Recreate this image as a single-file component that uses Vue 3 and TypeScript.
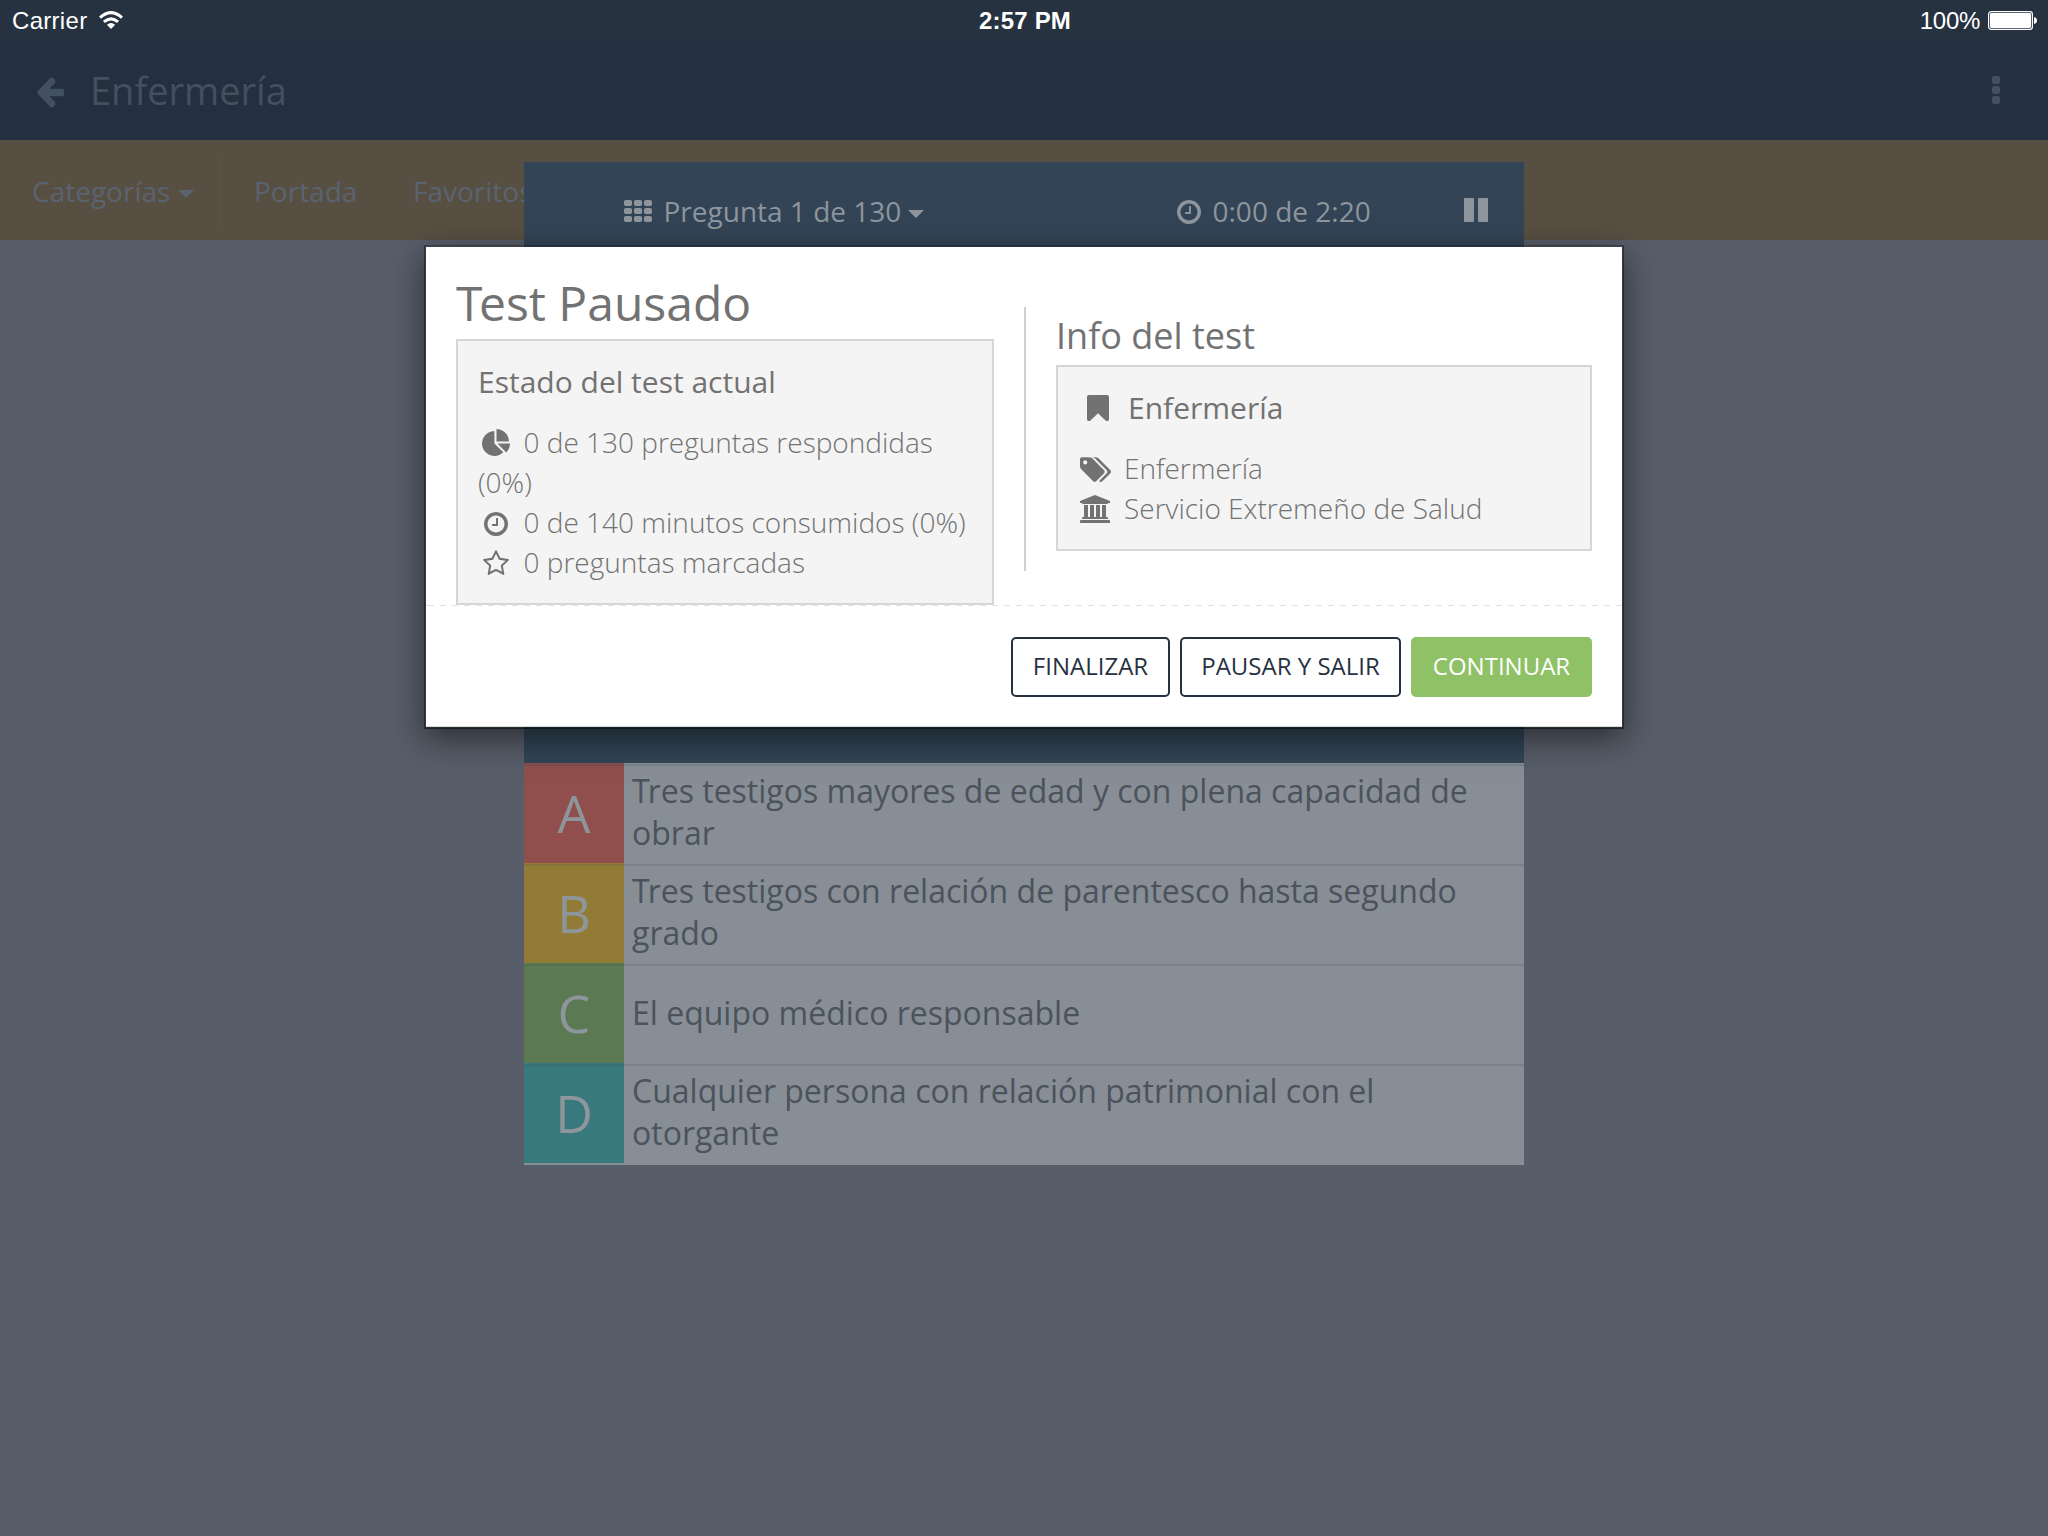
<script setup lang="ts">
interface Answer {
  letter: string
  tone: string
  lines: string[]
}

const answers: Answer[] = [
  { letter: 'A', tone: 'red', lines: ['Tres testigos mayores de edad y con plena capacidad de', 'obrar'] },
  { letter: 'B', tone: 'yellow', lines: ['Tres testigos con relación de parentesco hasta segundo', 'grado'] },
  { letter: 'C', tone: 'green', lines: ['El equipo médico responsable'] },
  { letter: 'D', tone: 'teal', lines: ['Cualquier persona con relación patrimonial con el', 'otorgante'] },
]

const clockPath =
  'M1024 544v448q0 14-9 23t-23 9h-320q-14 0-23-9t-9-23v-64q0-14 9-23t23-9h224v-352q0-14 9-23t23-9h64q14 0 23 9t9 23zm416 352q0-148-73-273t-198-198-273-73-273 73-198 198-73 273 73 273 198 198 273 73 273-73 198-198 73-273zm224 0q0 209-103 385.5t-279.5 279.5-385.5 103-385.5-103-279.5-279.5-103-385.5 103-385.5 279.5-279.5 385.5-103 385.5 103 279.5 279.5 103 385.5z'
</script>

<template>
  <div class="screen">
    <div class="status">
      <div class="status-left">
        <span class="carrier">Carrier</span>
        <svg class="wifi" viewBox="0 0 24 18">
          <g fill="none" stroke="#fff" stroke-width="3.1">
            <path d="M1 6.6Q12-3.4 23 6.6" />
            <path d="M4.9 10.9Q12 4.7 19.1 10.9" />
          </g>
          <path d="M12 18l-4.1-4.3q4.1-3.3 8.2 0z" fill="#fff" />
        </svg>
      </div>
      <div class="time">2:57 PM</div>
      <div class="status-right">
        <span class="percent">100%</span>
        <svg class="battery" viewBox="0 0 50 19">
          <rect x=".6" y=".6" width="43.8" height="17.8" rx="2.6" fill="none" stroke="#fff" stroke-width="1.2" />
          <rect x="2" y="2" width="41" height="15" rx="1.4" fill="#fff" />
          <path d="M46 6q3 .6 3 3.500t-3 3.500z" fill="#fff" />
        </svg>
      </div>
    </div>

    <header class="bar">
      <svg class="back" viewBox="64 151 1600 1618" preserveAspectRatio="none">
        <path d="M1664 896v128q0 53-32.5 90.5t-84.5 37.5h-704l293 294q38 36 38 90t-38 90l-75 76q-37 37-90 37-52 0-91-37l-651-652q-37-37-37-90 0-52 37-91l651-650q38-38 91-38 52 0 90 38l75 74q38 38 38 91t-38 91l-293 293h704q52 0 84.5 37.5t32.5 90.5z" />
      </svg>
      <h1>Enfermería</h1>
      <svg class="dots" viewBox="0 0 8 28">
        <rect v-for="i in 3" :key="i" width="8" height="8" rx="2.2" :y="(i - 1) * 10" />
      </svg>
    </header>

    <nav class="tabs">
      <div class="tab first">Categorías<i class="caret"></i></div>
      <div class="tab second">Portada</div>
      <div class="tab">Favoritos</div>
    </nav>

    <section class="quiz">
      <div class="quiz-head">
        <svg class="grid" viewBox="0 0 28 22">
          <template v-for="r in 3" :key="r">
            <rect v-for="c in 3" :key="c" :x="(c - 1) * 10" :y="(r - 1) * 8" width="8" height="6" rx="1.8" />
          </template>
        </svg>
        <span class="question">Pregunta 1 de 130</span>
        <i class="caret"></i>
        <svg class="clock" viewBox="128 128 1536 1536"><path :d="clockPath" /></svg>
        <span class="timer">0:00 de 2:20</span>
        <svg class="pause" viewBox="0 0 24 24">
          <rect width="10" height="24" rx="1" />
          <rect x="14" width="10" height="24" rx="1" />
        </svg>
      </div>
      <div class="answers">
        <div v-for="a in answers" :key="a.letter" class="answer">
          <div class="letter" :class="a.tone">{{ a.letter }}</div>
          <div class="answer-text" :class="{ wrapped: a.lines.length > 1 }">
            <div v-for="l in a.lines" :key="l" :class="{ kern: l.startsWith('T') }">{{ l }}</div>
          </div>
        </div>
      </div>
    </section>

    <div class="modal">
      <div class="modal-body">
        <div class="col-left">
          <h2>Test Pausado</h2>
          <div class="box state">
            <h4>Estado del test actual</h4>
            <p>
              <svg class="i-pie" viewBox="0 0 1728 1664"><path d="M768 890l546 546q-106 108-247.500 168t-298.500 60q-209 0-385.500-103t-279.500-279.500-103-385.500 103-385.500 279.500-279.500 385.500-103v762zm187 6h773q0 157-60 298.500t-168 247.500zm709-128h-768v-768q209 0 385.500 103t279.500 279.500 103 385.500z" /></svg>
              <span>0 de 130 preguntas respondidas</span><br />(0%)
            </p>
            <p>
              <svg class="i-clock" viewBox="128 128 1536 1536"><path :d="clockPath" /></svg>
              <span>0 de 140 minutos consumidos (0%)</span>
            </p>
            <p>
              <svg class="i-star" viewBox="64 32 1664 1587"><path d="M1201 1004l306-297-422-62-189-382-189 382-422 62 306 297-73 421 378-199 377 199zm527-357q0 22-26 48l-363 354 86 500q1 7 1 20 0 50-41 50-19 0-40-12l-449-236-449 236q-22 12-40 12-21 0-31.500-14.500t-10.500-35.500q0-6 2-20l86-500-364-354q-25-27-25-48 0-37 56-46l502-73 225-455q19-41 49-41t49 41l225 455 502 73q56 9 56 46z" /></svg>
              <span>0 preguntas marcadas</span>
            </p>
          </div>
        </div>
        <div class="divider"></div>
        <div class="col-right">
          <h3>Info del test</h3>
          <div class="box info">
            <h4>
              <svg class="i-mark" viewBox="256 128 1280 1504" preserveAspectRatio="none"><path d="M1420 128q23 0 44 9 33 13 52.500 41t19.500 62v1289q0 34-19.500 62t-52.500 41q-19 8-44 8-48 0-83-32l-441-424-441 424q-36 33-83 33-23 0-44-9-33-13-52.500-41t-19.500-62v-1289q0-34 19.500-62t52.500-41q21-9 44-9h1048z" /></svg>
              <span>Enfermería</span>
            </h4>
            <p>
              <svg class="i-tags" viewBox="0 128 1899 1515"><path d="M448 448q0-53-37.500-90.500t-90.500-37.500-90.500 37.500-37.500 90.500 37.500 90.500 90.500 37.500 90.500-37.500 37.500-90.500zm1067 576q0 53-37 90l-491 492q-39 37-91 37-53 0-90-37l-715-716q-38-37-64.500-101t-26.500-117v-416q0-52 38-90t90-38h416q53 0 117 26.500t102 64.500l715 714q37 39 37 91zm384 0q0 53-37 90l-491 492q-39 37-91 37-36 0-59-14t-53-45l470-470q37-37 37-90 0-52-37-91l-715-714q-38-38-102-64.500t-117-26.500h224q53 0 117 26.500t102 64.500l715 714q37 39 37 91z" /></svg>
              <span>Enfermería</span>
            </p>
            <p>
              <svg class="i-bank" viewBox="0 0 1920 1792"><path d="M960 0l960 384v128h-128q0 26-20.500 45t-48.500 19h-1526q-28 0-48.500-19t-20.500-45h-128v-128zm-704 640h256v768h128v-768h256v768h128v-768h256v768h128v-768h256v768h59q28 0 48.500 19t20.500 45v64h-1664v-64q0-26 20.500-45t48.500-19h59v-768zm1595 960q28 0 48.500 19t20.500 45v128h-1920v-128q0-26 20.500-45t48.500-19h1782z" /></svg>
              <span>Servicio Extremeño de Salud</span>
            </p>
          </div>
        </div>
      </div>
      <div class="modal-foot">
        <button class="b1">FINALIZAR</button>
        <button class="b2">PAUSAR Y SALIR</button>
        <button class="b3">CONTINUAR</button>
      </div>
    </div>
  </div>
</template>

<style>
body {
  background: #575d69;
}
</style>

<style scoped>
.screen {
  position: relative;
  width: 2048px;
  height: 1536px;
  overflow: hidden;
  background: #575d69;
  font-family: "Open Sans", "Liberation Sans", sans-serif;
  white-space: nowrap;
}
h1, h2, h3, h4, p {
  margin: 0;
  font-weight: 400;
}
svg {
  display: block;
  fill: currentColor;
  flex: none;
}
.status {
  display: grid;
  grid-template-columns: 1fr auto 1fr;
  box-sizing: border-box;
  height: 40px;
  padding: 0 10px 0 12px;
  background: #26323f;
  color: #fff;
  font: 24px/41px "Liberation Sans", Arial, sans-serif;
}
.status-left, .status-right {
  display: flex;
}
.status-right {
  justify-content: flex-end;
}
.carrier {
  letter-spacing: 0.3px;
}
.percent {
  letter-spacing: -0.3px;
}
.wifi {
  width: 24px;
  height: 18px;
  margin: 11px 0 0 12px;
}
.time {
  font-weight: 700;
  letter-spacing: 0.2px;
}
.battery {
  width: 50px;
  height: 19px;
  margin: 11px 0 0 8px;
}
.bar {
  display: flex;
  height: 100px;
  background: #243040;
  color: #43505f;
}
.back {
  width: 29.500px;
  height: 31px;
  margin: 37px 0 0 34.500px;
}
.bar h1 {
  flex: 1;
  margin-left: 26px;
  font-size: 38px;
  line-height: 100px;
}
.dots {
  width: 8px;
  height: 28px;
  margin: 36px 48px 0 0;
}
.tabs {
  display: flex;
  height: 100px;
  background: #574f42;
  color: #5a6371;
  font-size: 28px;
  line-height: 102px;
}
.tab.first {
  display: flex;
  box-sizing: border-box;
  width: 221px;
  padding-left: 32px;
  background: linear-gradient(#5a5349, #5a5349) right 16px / 1px 70px no-repeat;
}
.tab.second {
  width: 159px;
  padding-left: 33px;
}
.caret {
  width: 0;
  height: 0;
  border: 8px solid transparent;
  border-top-color: currentColor;
  border-bottom: 0;
}
.first .caret {
  margin: 50px 0 0 8px;
}
.quiz {
  position: absolute;
  left: 524px;
  top: 162px;
  width: 1000px;
  background: #324456;
}
.quiz-head {
  display: flex;
  height: 601px;
  color: #8e959d;
  font-size: 28px;
  line-height: 98px;
}
.grid {
  width: 28px;
  height: 22px;
  margin: 38px 0 0 100px;
}
.question {
  margin-left: 11.500px;
}
.quiz-head .caret {
  margin: 48px 0 0 7px;
}
.clock {
  width: 24px;
  height: 24px;
  margin: 38px 0 0 auto;
}
.timer {
  width: 251.500px;
  margin-left: 11.500px;
}
.pause {
  width: 24px;
  height: 24px;
  margin: 36px 36px 0 0;
}
.answers {
  padding-bottom: 2px;
  background: #878e96;
}
.answer {
  position: relative;
  display: flex;
  height: 100px;
  color: #4b535b;
}
.answer::after {
  content: "";
  position: absolute;
  left: 0;
  right: 0;
  top: 1px;
  height: 2px;
  background: rgba(60, 70, 78, 0.17);
}
.letter {
  width: 100px;
  color: #8e969c;
  font-size: 52px;
  line-height: 100px;
  text-align: center;
}
.red { background: #904f4c; }
.yellow { background: #927b36; }
.green { background: #5b7a53; }
.teal { background: #38797e; }
.answer-text {
  display: flex;
  flex-direction: column;
  justify-content: center;
  margin: -1px 0 0 8px;
  font-size: 32px;
  line-height: 42px;
}
.answer-text.wrapped {
  margin-top: -2px;
}
.kern::first-letter {
  letter-spacing: -2px;
}
.modal {
  position: absolute;
  left: 424px;
  top: 245px;
  box-sizing: border-box;
  width: 1200px;
  height: 484px;
  border: 2px solid rgba(0, 0, 0, 0.38);
  border-top-color: rgba(0, 0, 0, 0.24);
  border-bottom-color: rgba(0, 0, 0, 0.5);
  background: #fff;
  background-clip: padding-box;
  box-shadow: 0 10px 30px rgba(0, 0, 0, 0.5), inset 0 -1px 0 #d3dada;
  color: #727272;
}
.modal-body {
  display: flex;
  height: 358px;
  padding: 0 30px;
}
.col-left {
  width: 538px;
}
.divider {
  width: 2px;
  height: 264px;
  margin: 60px 30px 0;
  background: #cfcfcf;
}
.col-right {
  width: 536px;
}
h2 {
  height: 92px;
  font-size: 48px;
  line-height: 111px;
}
h2::first-letter {
  letter-spacing: -3.500px;
}
h3 {
  height: 118px;
  font-size: 36px;
  line-height: 178px;
}
.box {
  box-sizing: border-box;
  border: 2px solid #d6d6d6;
  background: #f4f4f4;
}
.state {
  height: 266px;
  padding: 20px;
}
.info {
  height: 186px;
  padding: 20px;
}
.box h4 {
  display: flex;
  height: 61px;
  font-size: 30px;
  line-height: 41px;
}
.box p {
  font-size: 28px;
  font-weight: 300;
  line-height: 40px;
}
.info p {
  display: flex;
}
.state svg {
  display: inline-block;
}
.i-pie {
  width: 28px;
  height: 27px;
  margin: 0 13.500px 0 4px;
  vertical-align: -3px;
}
.i-clock {
  width: 24px;
  height: 24px;
  margin: 0 15.500px 0 6px;
  vertical-align: -3px;
}
.i-star {
  width: 26px;
  height: 25px;
  margin: 0 14.500px 0 5px;
  vertical-align: -2px;
}
.i-mark {
  width: 22px;
  height: 26px;
  margin: 8px 19px 0 9px;
}
.i-tags {
  width: 31px;
  height: 25px;
  margin: 9px 13px 0 2px;
}
.i-bank {
  width: 30px;
  height: 28px;
  margin: 7px 14px 0 2px;
}
.modal-foot {
  display: flex;
  justify-content: flex-end;
  gap: 10px;
  box-sizing: border-box;
  height: 122px;
  padding: 32px 30px 0 0;
  background:
    linear-gradient(#e2e2e2, #e2e2e2) 0 0 / 2px 1px no-repeat,
    repeating-linear-gradient(90deg, transparent 0 2px, #e2e2e2 2px 8px, transparent 8px 12px) 0 0 / 100% 1px no-repeat;
}
button {
  box-sizing: border-box;
  height: 60px;
  padding: 0 0 2px;
  border: 2px solid #26323f;
  border-radius: 5px;
  background: #fff;
  color: #26323f;
  font: 24px/54px "Open Sans", sans-serif;
}
.b1 { width: 159px; }
.b2 { width: 221px; }
.b3 {
  width: 181px;
  border-color: #8fc167;
  background: #8fc167;
  color: #fff;
}
</style>
